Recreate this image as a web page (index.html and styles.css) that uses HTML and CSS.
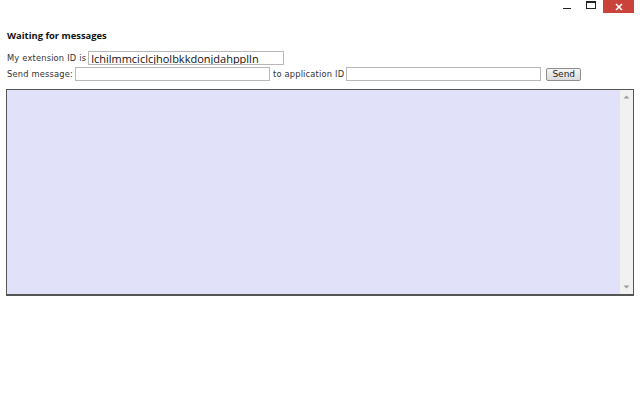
FILE: index.html
```html
<!DOCTYPE html>
<html>
<head>
<meta charset="utf-8">
<link rel="stylesheet" href="styles.css">
</head>
<body>
<div class="titlebar">
  <div class="ctl min"><span class="min-line"></span></div>
  <div class="ctl max"><span class="max-box"></span></div>
  <div class="ctl close">
    <svg width="10" height="8" viewBox="0 0 10 8"><path d="M2 1 L8 7 M8 1 L2 7" stroke="#fff" stroke-width="1.6"/></svg>
  </div>
</div>
<div class="content">
  <h1 class="heading">Waiting for messages</h1>
  <div class="row">
    <span class="label">My extension ID is</span>
    <input class="field idfield" type="text" value="lchilmmciclcjholbkkdonjdahpplln">
  </div>
  <div class="row">
    <span class="label">Send message:</span>
    <input class="field msg" type="text">
    <span class="label">to application ID</span>
    <input class="field app" type="text">
    <button class="send">Send</button>
  </div>
  <div class="log">
    <div class="log-area"></div>
    <div class="scroll">
      <svg width="7" height="4" viewBox="0 0 7 4"><path d="M0.5 3.5 L3.5 0.5 L6.5 3.5Z" fill="#9a9a9a"/></svg>
      <svg width="7" height="4" viewBox="0 0 7 4"><path d="M0.5 0.5 L3.5 3.5 L6.5 0.5Z" fill="#9a9a9a"/></svg>
    </div>
  </div>
</div>
</body>
</html>
```
FILE: styles.css
```css
html, body {
  margin: 0;
  padding: 0;
  background: #ffffff;
}
body {
  font-family: "Open Sans", "DejaVu Sans", sans-serif;
  color: #222;
}
.titlebar {
  height: 14px;
  display: flex;
  justify-content: flex-end;
  align-items: flex-start;
  padding-right: 6px;
}
.ctl {
  display: flex;
  align-items: center;
  justify-content: center;
  height: 13px;
}
.min { width: 24px; }
.min-line {
  display: block;
  width: 8px;
  height: 1px;
  background: #222;
  margin-top: 3px;
}
.max { width: 24px; }
.max-box {
  display: block;
  width: 8px;
  height: 5px;
  border: 1px solid #222;
  border-top-width: 2px;
  margin-bottom: 3px;
}
.close {
  width: 31px;
  background: #c9433b;
}
.content {
  padding: 0 6px;
}
.heading {
  font-size: 9.4px;
  font-weight: bold;
  margin: 15px 0 0 1px;
  height: 21px;
  line-height: 14px;
  color: #111;
}
.row {
  display: flex;
  align-items: center;
  height: 16px;
  margin-left: 1px;
}
.label {
  font-size: 8.3px;
  letter-spacing: 0.18px;
  color: #333;
  font-family: "DejaVu Sans", sans-serif;
}
.field {
  box-sizing: border-box;
  height: 14px;
  border: 1px solid #b8b8b8;
  padding: 0 2px;
  margin: 0 3px 0 2px;
  background: #fff;
  font-family: "Open Sans", sans-serif;
  font-size: 11px;
  color: #111;
  outline: none;
}
.idfield { width: 196px; margin-left: 2px; }
.msg { width: 195px; }
.app { width: 195px; margin-right: 5px; }
.send {
  box-sizing: border-box;
  height: 13px;
  width: 35px;
  padding: 0;
  font-family: "DejaVu Sans", sans-serif;
  font-size: 9px;
  line-height: 11px;
  color: #222;
  background: linear-gradient(#f4f4f4, #dcdcdc);
  border: 1px solid #8e8e8e;
  border-radius: 2px;
}
.log {
  display: flex;
  margin-top: 7px;
  height: 207px;
  width: 628px;
  box-sizing: border-box;
  border: 1px solid #555;
  border-bottom-width: 2px;
  background: #e1e1f9;
}
.log-area {
  flex: 1;
}
.scroll {
  width: 13px;
  background: #f1f1f1;
  border-left: 1px solid #e4e4e4;
  display: flex;
  flex-direction: column;
  justify-content: space-between;
  align-items: center;
  padding: 5px 0;
}
```
